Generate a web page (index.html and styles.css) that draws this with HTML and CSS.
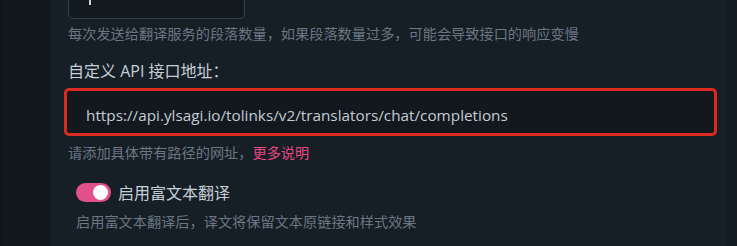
FILE: index.html
```html
<!DOCTYPE html>
<html lang="zh-CN">

<head>
    <meta charset="UTF-8" />
    <title>翻译服务设置</title>
    <link rel="stylesheet" href="styles.css">
</head>

<body>
    <div class="layout">
        <aside class="sidebar"></aside>

        <main class="panel">
            <div class="field">
                <div class="number-box"><span class="caret"></span></div>
                <p class="hint">每次发送给翻译服务的段落数量，如果段落数量过多，可能会导致接口的响应变慢</p>
            </div>

            <div class="field">
                <label class="label" for="api">自定义 API 接口地址：</label>
                <input class="url-input" type="text" id="api"
                    value="https://api.ylsagi.io/tolinks/v2/translators/chat/completions" />
                <p class="hint">请添加具体带有路径的网址，<a class="more" href="#">更多说明</a></p>
            </div>

            <div class="field switch-field">
                <label class="switch-row">
                    <span class="switch"><span class="knob"></span></span>
                    <span class="switch-text">启用富文本翻译</span>
                </label>
                <p class="hint">启用富文本翻译后，译文将保留文本原链接和样式效果</p>
            </div>
        </main>

        <aside class="scroll-strip"></aside>
    </div>
</body>

</html>
```

FILE: styles.css
```css
html,
body {
    margin: 0;
    height: 100%;
}

body {
    background: #161e26;
    font-family: "Open Sans", "Noto Sans CJK SC", sans-serif;
    overflow: hidden;
}

.layout {
    display: flex;
    height: 246px;
}

.sidebar {
    width: 51px;
    flex-shrink: 0;
    background: #11181e;
    border-left: 3px solid #0f151a;
    box-sizing: border-box;
}

.scroll-strip {
    width: 10px;
    flex-shrink: 0;
    background: #131a20;
}

.panel {
    flex: 1;
    padding: 0 0 0 17px;
}

.field {
    margin: 0;
}

.number-box {
    width: 175px;
    height: 20px;
    margin-top: -3px;
    border: 1px solid #39424b;
    border-radius: 5px;
    background: #12191f;
    position: relative;
}

.caret {
    position: absolute;
    left: 20px;
    top: 1px;
    width: 2px;
    height: 6px;
    background: #c9d2dc;
}

.hint {
    margin: 5px 0 0;
    font-size: 14.2px;
    line-height: 20px;
    color: #6c7783;
}

.label {
    display: block;
    margin-top: 15px;
    font-size: 16px;
    line-height: 24px;
    color: #c6ced6;
}

.url-input {
    display: block;
    box-sizing: border-box;
    width: 653px;
    height: 48px;
    margin: 5px 0 0 -4px;
    padding: 6px 19px 0;
    border: 3px solid #dc2a20;
    border-radius: 5px;
    background: #12181e;
    color: #c3ccd5;
    font-family: "Open Sans", "Noto Sans CJK SC", sans-serif;
    font-size: 15.3px;
    outline: none;
}

.url-input + .hint {
    margin-top: 7px;
}

.more {
    color: #e8467f;
    text-decoration: none;
}

.switch-field {
    padding-left: 8px;
    margin-top: 19px;
}

.switch-row {
    display: flex;
    align-items: center;
    gap: 7px;
    height: 20px;
}

.switch {
    width: 35px;
    height: 19px;
    border-radius: 10px;
    background: #e1508a;
    position: relative;
}

.knob {
    position: absolute;
    right: 3px;
    top: 2px;
    width: 15px;
    height: 15px;
    border-radius: 50%;
    background: #ffffff;
}

.switch-text {
    font-size: 16px;
    color: #c6ced6;
}

.switch-field .hint {
    margin-top: 10px;
}
```
